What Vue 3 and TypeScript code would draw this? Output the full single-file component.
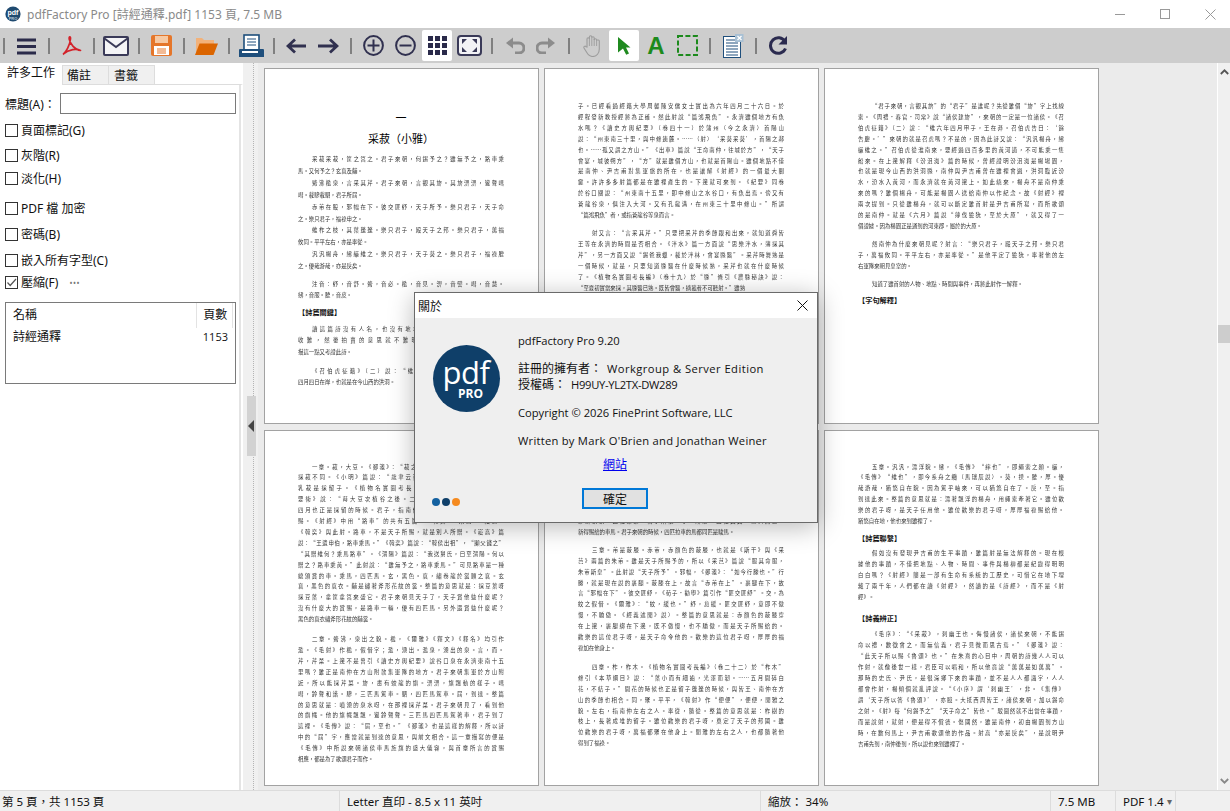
<script setup lang="ts">
interface Para {
  mt: number
  lh?: number
  head?: boolean
  lines?: string[]
  text?: string
  indent?: boolean
}
interface Page {
  title?: boolean
  paras: Para[]
}

const rows = [
  { label: '頁面標記', key: '(G)', mt: 10 },
  { label: '灰階', key: '(R)', mt: 12 },
  { label: '淡化', key: '(H)', mt: 10 },
  { label: 'PDF 檔 加密', key: '', mt: 17 },
  { label: '密碼', key: '(B)', mt: 13 },
  { label: '嵌入所有字型', key: '(C)', mt: 13 },
  { label: '壓縮', key: '(F)', mt: 9, checked: true, more: true },
]

const titleLabel = '標題(A)\uFF1A'
const pageName = '采菽\uFF08小雅\uFF09'
const statusPage = '第 5 頁\uFF0C共 1153 頁'
const statusZoom = '縮放\uFF1A 34%'
const ownerLabel = '註冊的擁有者\uFF1A'
const licenseLabel = '授權碼\uFF1A'

function fw(s: string): string {
  return s
    .replace(/,/g, '\uFF0C')
    .replace(/:/g, '\uFF1A')
    .replace(/\?/g, '\uFF1F')
    .replace(/;/g, '\uFF1B')
    .replace(/\(/g, '\uFF08')
    .replace(/\)/g, '\uFF09')
}

const pages: Page[] = [
  {
    title: true,
    paras: [
      { mt: 6, lh: 11.9, indent: true, lines: ['采菽采菽,筐之筥之。君子來朝,何錫予之?雖無予之,路車乘', '馬。又何予之?玄袞及黼。'] },
      { mt: 0, lh: 11.9, indent: true, lines: ['觱沸檻泉,言采其芹。君子來朝,言觀其旂。其旂淠淠,鸞聲嘒', '嘒。載驂載駟,君子所屆。'] },
      { mt: 0, lh: 11.9, indent: true, lines: ['赤芾在股,邪幅在下。彼交匪紓,天子所予。樂只君子,天子命', '之。樂只君子,福祿申之。'] },
      { mt: 0, lh: 11.9, indent: true, lines: ['維柞之枝,其葉蓬蓬。樂只君子,殿天子之邦。樂只君子,萬福', '攸同。平平左右,亦是率從。'] },
      { mt: 0, lh: 11.9, indent: true, lines: ['汎汎楊舟,紼纚維之。樂只君子,天子葵之。樂只君子,福祿膍', '之。優哉游哉,亦是戾矣。'] },
      { mt: 6, lh: 11, indent: true, lines: ['注音:紓,音舒。觱,音必。檻,音見。淠,音譬。嘒,音慧。', '紼,音服。膍,音皮。'] },
      { mt: 6, head: true, text: '【詩篇關鍵】' },
      { mt: 7, lh: 11.4, indent: true, lines: ['讀這篇詩沒有人名,也沒有地名,然而讀者只要細心體會', '收難,然後拍賣的意思就不難明白,這是尹吉甫的作品', '描這一點又考證此詩。'] },
      { mt: 8, lh: 11, indent: true, lines: ['《召伯虎征籍》(二)說:“維六年四月甲子,王在莽。”', '四月四日在岸,也就是在今山西的洪洞。'] },
    ],
  },
  {
    paras: [
      { mt: 32, lines: ['子。已經看過經籍大學周馨陳安儒女士實出為六年四月二十六日。於', '經程發新教授經將為正確。然此射說“篇鴻飛魚”。永濟雖個地方有魚', '水嗎?《讀史方輿紀要》(卷四十一)於蒲州(今之永濟)首陽山', '說:“州東南三十里,與中條連麓。……(射)‘采葵采葵’,首陽之鄰', '也。……孤又謂之方山。”《出車》篇說“王命南仲,往城於方”,“天子', '會宴,城彼朔方”,“方”就是雖個方山,也就是首陽山。雖個地點不僅', '是南仲、尹吉甫對集軍旅的所在,也是讓解《射經》的一個最大關', '鍵。許許多多射篇都是在雖裡產生的。下邊就可來到。《紀要》同卷', '於谷口關說:“州東南十五里,即中條山之水谷口,有魚出焉。傍又有', '蒼龍谷泉,俱注入大河。又有孔龍溝,在州東三十里中條山。”所謂', '“篇鴻飛魚”者,或指蒼龍谷等泉而言。'] },
      { mt: 7, indent: true, lines: ['射又言:“言采其芹。”只要把采芹的季節跟和出來,就知道舜皆', '王等在永濟的時間是否相合。《泮水》篇一方面說“思樂泮水,薄採其', '芹”,另一方面又說“錫爸我蠟,載於泮林,會宴縣醫”。采芹時舞熟是', '一個時候,就是,只要知道縣醫在什麼時候熟,采芹也就在什麼時候', '了。《植物名實圖考長編》(卷十九)於“縣”條引《農縣秘訣》說:', '“至夏初實當來採,其縣醫已熟。既皆會醫,摘菰者不可聽射。”雖熟'] },
    ],
  },
  {
    paras: [
      { mt: 32, indent: true, lines: ['“君子來朝,言觀其旂”的“君子”是誰呢?先從雖個“旂”字上找線', '索。《周禮·春官·司常》說“諸侯建旂”,來朝的一定是一位諸侯。《召', '伯虎征籍》(二)說:“維六年四月甲子,王在莽。召伯虎告曰:‘餘', '告慶。’”來朝的就是召虎嗎?不是的,因為此詩又說:“汎汎楊舟,紼', '纚維之。”召伯虎從淮南來,要經過四百多里的黃河道,不可能乘一隻', '船來。在上邊解釋《汾沮洳》篇的時候,曾經證明汾沮洳是楊場園,', '也就是現今山西的洪洞縣,南仲與尹吉甫曾在雖裡會過,洪洞臨近汾', '水,汾水入黃河,而永濟就在黃河邊上。如此繞來,楊舟不是南仲乘', '來的嗎?雖個楊舟,可能是楊園人送給南仲以作紀念。故《射經》裡', '兩次提到。只從雖楊舟,就可以斷定雖首射是尹吉甫所寫,而所歌頌', '的是南仲。就是《六月》篇說“薄伐獫狁,至於大原”,就又得了一', '個證據。因為楊園正是通到的河東郡,屬於的大原。'] },
      { mt: 7, indent: true, lines: ['然南仲為什麼來朝見呢?射言:“樂只君子,殿天子之邦。樂只君', '子,萬福攸同。平平左右,亦是率從。”是他平定了獫狁,率著他的左', '右軍隊來朝見皇室的。'] },
      { mt: 7, indent: true, lines: ['知道了雖首射的人物、地點、時間與事件,再將此射作一解釋。'] },
      { mt: 5, head: true, text: '【字句解釋】' },
    ],
  },
  {
    paras: [
      { mt: 30.5, indent: true, lines: ['一章。菽,大豆。《鄭箋》:“菽之言以為藿。”這與《七月》的', '採菽不同。《小明》篇說:“歲聿云莫,采蕭穫菽。”此處的菽是', '乳菽是採留子。《植物名實圖考長編》引《齊民要術》之說,', '要術》說:“蒔大豆次植谷之後。二月中旬為上時。”可見采菽', '四月也正是採留的時候。君子,指南仲。筐、筥,都是盛物器具。', '賜。《射經》中用“路車”的共有五篇,《韓奕》《采芑》《崧高》', '《韓奕》與此射。路車,不是天子所賜,就是別人所贈。《崧高》篇', '說:“王遣申伯,路車乘馬。”《韓奕》篇說:“韓侯出祖”,“顯父餞之”', '“其贈維何?乘馬路車”。《渭陽》篇說:“我送舅氏,曰至渭陽。何以', '贈之?路車乘黃。”此射說:“雖無予之,路車乘馬。”可見路車是一種', '總頒賞的車。乘馬,四匹馬。玄,黑色。袞,繡卷龍於裳願之袞。玄', '袞,黑色的袞衣。黼是繡著斧形花紋的裳。整篇的意思就是:採豆葉呀', '採豆葉,拿筐拿筥來盛它。君子來朝見天子了,天子賞他些什麼呢?', '沒有什麼大的賞賜,是路車一輛,優有四匹馬。另外還賞些什麼呢?', '黑色的袞衣繡斧形花紋的黼裳。'] },
      { mt: 9, indent: true, lines: ['二章。觱沸,泉出之貌。檻,《爾雅》《釋文》《釋名》均引作', '濫。《毛射》作檻,假借字;濫,湧出。濫泉,湧出的泉。言,而。', '芹,芹菜。上邊不是曾引《讀史方輿紀要》說谷口泉在永濟東南十五', '里嗎?雖正是南仲在方山附款集軍隊的地方。君子來朝集軍於方山附', '近,所以能採芹菜。旂,畫有蛟龍的旗。淠淠,旗飄動的樣子。嘒', '嘒,鈴聲和諧。驂,三匹馬駕車。駟,四匹馬駕車。屆,到達。整篇', '的意思就是:噴湧的泉水呀,在那裡採芹菜。君子來朝見了,看到他', '的旗幟。他的旗幟飄飄,鸞鈴聲聲。三匹馬四匹馬駕著車,君子到了', '這裡。《毛傳》說:“屆,至也。”《鄭箋》也是這樣的解釋,所以詩', '中的“屆”字,應當就是到達的意思,與前文相合。這一章描寫的便是', '《毛傳》中所說來朝諸侯車馬旌旗的盛大儀容,與首章所言的賞賜', '相應,都是為了歌頌君子而作。'] },
    ],
  },
  {
    paras: [
      { mt: 85, lines: ['驂騑騤騤,四牡業業,君子所依,小人所腓,四牡翼翼,象弭魚服。', '新得賜給的車馬。君子來朝的時候,四匹拉車的馬都同匹是駿馬。'] },
      { mt: 7, indent: true, lines: ['三章。芾是蔽膝。赤芾,赤顏色的蔽膝,也就是《斯干》與《采', '芑》兩篇的朱芾。雖是天子所賜予的,所以《采芑》篇說“服其命服,', '朱芾斯皇”。此射說“天子所予”。邪幅,《鄭箋》:“如今行縢也。”行', '縢,就是現在說的裹腿。蔽膝在上,故言“赤芾在上”。裹腿在下,故', '言“邪幅在下”。彼交匪紓,《荀子·勸學》篇引作“匪交匪紓”。交,為', '紋之假借。《爾雅》:“紋,緩也。”紓,怠緩。匪交匪紓,意即不傲', '慢,不驕傲。《經義述聞》說)。整篇的意思就是:赤顏色的蔽膝穿', '在上邊,裹腿綁在下邊,既不傲慢,也不驕傲,而是天子所賜給的。', '歡樂的這位君子呀,是天子命令他的。歡樂的這位君子呀,厚厚的福', '祿加在他身上。'] },
      { mt: 8, indent: true, lines: ['四章。柞,柞木。《植物名實圖考長編》(卷二十二)於“柞木”', '條引《本草綱目》說:“葉小而有細齒,光澤而韌。……五月開碎白', '花,不結子。”開花的時候也正是留子蓬蓬的時候,與皆王、南仲在方', '山的季節也相合。同,聚。平平,《韓射》作“便便”,便便,閒雅之', '貌。左右,指南仲左右之人。率從,隨從。整篇的意思就是:柞樹的', '枝上,長著成堆的留子。雖位歡樂的君子呀,奠定了天子的邦國。雖', '位歡樂的君子呀,萬福都聚在他身上。閒雅的左右之人,也都隨著他', '得到了福祿。'] },
    ],
  },
  {
    paras: [
      { mt: 30.5, indent: true, lines: ['五章。汎汎,漂浮貌。紼,《毛傳》“繂也”,即繩索之類。纚,', '《毛傳》“維也”,即今系舟之纜(馬瑞辰說)。葵,揆。膍,厚。優', '哉游哉,猶悠自在貌。因為駕乎岫來,可以猶悠自在了。戾,至。指', '到達此來。整篇的意思就是:漂著飄浮的楊舟,用繩索牽著它。雖位歡', '樂的君子呀,是天子任用他。雖位歡樂的君子呀,厚厚福祿賜給他。', '猶悠自在地,他也來到雖裡了。'] },
      { mt: 6, head: true, text: '【詩篇聯繫】' },
      { mt: 5, indent: true, lines: ['假如沒有發現尹吉甫的生平事蹟,雖篇射是無法解釋的。現在根', '據他的事蹟,不僅把地點、人物、時間、事件與楊柳都是紀錄得明明', '白白嗎?《射經》簡是一部有生命有系統的工歷史,可惜它在地下埋', '藏了兩千年,人們都在讀《射經》,然讀的是《詩經》,而不是《射', '經》。'] },
      { mt: 11, head: true, text: '【詩義辨正】' },
      { mt: 6, indent: true, lines: ['《毛序》:“《采菽》,刺幽王也。侮慢諸侯,諸侯來朝,不能錫', '命以禮,數徵會之,而無信義,君子見微而思古焉。”《鄭箋》說:', '“此天子所以賜《魯頌》也。”在朱熹的心目中,周朝的詩幾人人可以', '作射,就像後世一樣,君臣可以唱和,所以他竟說“萬萬是如萬萬”。', '那時的史氏、尹氏,是很深鄉下來的事蹟,並不是人人都識字,人人', '都會作射,楊傾個就亂評說。“《小序》謂‘刺幽王’,非。《集傳》', '謂‘天子所以答《魯頌》’,亦臆。大抵西周皆王,諸侯來朝,加以錫命', '之射。《射》每“何錫予之”“天子命之”皆也。”駁圖然就不出當在事蹟,', '而是說射,就射,便是得不償德。傷國然,雖是南仲,初由楊園到方山', '時,在數何馬上,尹吉甫歌頌他的作品。射高“亦是戾矣”,是說明尹', '吉甫先到,南仲後到,所以說也來到雖裡了。'] },
    ],
  },
]

function lineHeight(p: Para): string {
  return `${p.lh ?? 10.9}px`
}
</script>

<template>
  <div class="win">
    <header class="titlebar">
      <svg class="appicon" width="16" height="16" viewBox="0 0 16 16">
        <circle cx="8" cy="8" r="7.6" fill="#1f4a70" />
        <text x="8" y="8.5" text-anchor="middle" class="appicon-a">pdf</text>
        <text x="8" y="13.6" text-anchor="middle" class="appicon-b">PRO</text>
      </svg>
      <span class="wintitle">pdfFactory Pro [詩經通釋.pdf] 1153 頁, 7.5 MB</span>
      <div class="winctl">
        <svg width="11" height="11" viewBox="0 0 11 11"><path d="M0 5.5h10" stroke="#999" fill="none" /></svg>
        <svg width="11" height="11" viewBox="0 0 11 11"><rect x=".5" y=".5" width="9" height="9" stroke="#999" fill="none" /></svg>
        <svg width="11" height="11" viewBox="0 0 11 11"><path d="M.5.5l10 10M10.5.5l-10 10" stroke="#999" fill="none" /></svg>
      </div>
    </header>

    <nav class="toolbar">
      <i class="sep m0"></i>
      <svg class="m12" width="19" height="18" viewBox="0 0 19 18"><path d="M0 3h19M0 9.5h19M0 16h19" stroke="#2b2b4a" stroke-width="2.8" /></svg>
      <i class="sep m12"></i>
      <svg class="m11" width="21" height="21" viewBox="0 0 21 21"><path d="M2 19.5C5 17 9 10 9.5 4 9.8 1 7.8 1 8.2 4 9 9 14 15 19.5 15.5 16 13.5 8 14 2.2 19.2" fill="none" stroke="#d3222a" stroke-width="1.7" stroke-linejoin="round" /></svg>
      <i class="sep m11"></i>
      <svg class="m8" width="26" height="20" viewBox="0 0 26 20"><rect x="1" y="1" width="24" height="18" rx="1" fill="#f4f4f6" stroke="#3a3a58" stroke-width="2" /><path d="M1.500 2.500L13 11 24.500 2.500" fill="none" stroke="#3a3a58" stroke-width="2" /></svg>
      <i class="sep m9"></i>
      <svg class="m11" width="21" height="21" viewBox="0 0 21 21"><rect width="21" height="21" rx="2" fill="#e5762a" /><rect x="4" y="1" width="13" height="7" fill="#f6c9a3" /><rect x="3" y="11" width="15" height="9" fill="#fff" /><path d="M6 14h9M6 16h9M6 18h9" stroke="#e5762a" /></svg>
      <i class="sep m11"></i>
      <svg class="m10" width="23" height="19" viewBox="0 0 23 19"><path d="M1 18V2h6l2 2h10v4H5z" fill="#f2b27a" /><path d="M0 19L4.500 7.500H23L18.500 19z" fill="#db6500" /></svg>
      <i class="sep m10"></i>
      <svg class="m9" width="25" height="24" viewBox="0 0 25 24"><rect x="5" y="1" width="15" height="15" fill="#fff" stroke="#1f4f7c" stroke-width="1.600" /><path d="M8 5h9M8 8h9M8 11h9" stroke="#1f4f7c" /><path d="M1 15h23a1 1 0 0 1 1 1v7H0v-7a1 1 0 0 1 1-1z" fill="#1f4f7c" /><rect x="3" y="17" width="16" height="2" fill="#fff" /></svg>
      <i class="sep m9"></i>
      <svg class="m11" width="20" height="16" viewBox="0 0 20 16"><path d="M20 8H2M9 1.500L2 8l7 6.500" fill="none" stroke="#30304f" stroke-width="2.800" /></svg>
      <svg class="m12" width="21" height="16" viewBox="0 0 21 16"><path d="M0 8h19M12 1.500L19 8l-7 6.500" fill="none" stroke="#30304f" stroke-width="2.800" /></svg>
      <i class="sep m11"></i>
      <svg class="m11" width="21" height="21" viewBox="0 0 21 21"><circle cx="10.500" cy="10.500" r="9.400" fill="none" stroke="#30304f" stroke-width="2" /><path d="M4.500 10.500h12M10.500 4.500v12" stroke="#30304f" stroke-width="2" /></svg>
      <svg class="m11" width="21" height="21" viewBox="0 0 21 21"><circle cx="10.500" cy="10.500" r="9.400" fill="none" stroke="#30304f" stroke-width="2" /><path d="M4.500 10.500h12" stroke="#30304f" stroke-width="2" /></svg>
      <span class="tbtn m6">
        <svg width="19" height="19" viewBox="0 0 19 19" fill="#2a2a4a"><rect width="5" height="5" /><rect x="7" width="5" height="5" /><rect x="14" width="5" height="5" /><rect y="7" width="5" height="5" /><rect x="7" y="7" width="5" height="5" /><rect x="14" y="7" width="5" height="5" /><rect y="14" width="5" height="5" /><rect x="7" y="14" width="5" height="5" /><rect x="14" y="14" width="5" height="5" /></svg>
      </span>
      <svg class="m5" width="25" height="21" viewBox="0 0 25 21"><rect x="1" y="1" width="23" height="19" rx="3" fill="#f2f2f5" stroke="#3a3a58" stroke-width="2" /><path d="M5 4h5L5 9zM20 4h-5l5 5zM5 17h5l-5-5zM20 17h-5l5-5z" fill="#3a3a58" /></svg>
      <i class="sep m9"></i>
      <svg class="m13" width="19" height="17" viewBox="0 0 19 17"><path d="M5 6h8a4.500 4.500 0 0 1 0 10H9" fill="none" stroke="#8c8c8c" stroke-width="3" /><path d="M0 6l7-5.500v11z" fill="#8c8c8c" /></svg>
      <svg class="m11" width="19" height="17" viewBox="0 0 19 17"><path d="M14 6H6a4.500 4.500 0 0 0 0 10h4" fill="none" stroke="#8c8c8c" stroke-width="3" /><path d="M19 6l-7-5.500v11z" fill="#8c8c8c" /></svg>
      <i class="sep m13"></i>
      <svg class="m13" width="17" height="22" viewBox="0 0 17 22"><path d="M4 12V4a1.200 1.200 0 0 1 2.400 0V2a1.200 1.200 0 0 1 2.400 0v1a1.200 1.200 0 0 1 2.400 0v2a1.200 1.200 0 0 1 2.400 0l1.800 0a1 1 0 0 1 .9 1v8c0 4-2.500 7.500-6.500 7.500-3 0-4.500-1.500-6-4L1 13c-.6-1.300 1-2.500 2-1.300z" fill="none" stroke="#9c9c9c" stroke-width="1.100" /><path d="M6.400 3v8M8.800 3v8M11.200 4v7M13.600 5v6" stroke="#9c9c9c" stroke-width=".9" /></svg>
      <span class="tbtn m9">
        <svg width="13" height="18" viewBox="0 0 13 18"><path d="M0 0l12.500 10.500H8l3 6-2.800 1.300L5 11.500 0 15.500z" fill="#1f8a1f" /></svg>
      </span>
      <span class="tool-a m9">A</span>
      <svg class="m13" width="21" height="21" viewBox="0 0 21 21"><rect x="1" y="1" width="19" height="19" fill="none" stroke="#1c8a1c" stroke-width="2" stroke-dasharray="5 2.400" /></svg>
      <i class="sep m11"></i>
      <svg class="m12" width="21" height="24" viewBox="0 0 21 24"><rect x=".5" y="2.500" width="17" height="21" fill="#fff" stroke="#1f4f7c" /><path d="M3 6h12M3 9h12M3 12h12M3 15h12M3 18h12M3 21h12" stroke="#1f4f7c" /><rect x="12" y="0" width="8.500" height="8" fill="#a8c0d4" /><path d="M14.500 2l4 4M18.500 2l-4 4" stroke="#fff" stroke-width="1.300" /></svg>
      <i class="sep m11"></i>
      <svg class="m11" width="20" height="19" viewBox="0 0 20 19"><path d="M17 5.500A7.800 7.800 0 1 0 17.500 12.500" fill="none" stroke="#2b2b4f" stroke-width="3" /><path d="M19 0v8.500h-8.500z" fill="#2b2b4f" /></svg>
    </nav>

    <main class="main">
      <aside class="panel">
        <div class="tabs">
          <span class="tab active">許多工作</span>
          <span class="tab second">備註</span>
          <span class="tab third">書籤</span>
        </div>
        <div class="form">
          <label class="titlerow"><span class="titlelabel">{{ titleLabel }}</span><span class="tinput"></span></label>
          <div v-for="r in rows" :key="r.label" class="check" :style="{ marginTop: r.mt + 'px' }">
            <span class="box">
              <svg v-if="r.checked" width="11" height="11" viewBox="0 0 11 11"><path d="M1.500 5.500L4.200 8.500 10 2" fill="none" stroke="#555" stroke-width="1.200" /></svg>
            </span>
            <span class="checklabel">{{ r.label }}{{ r.key }}</span>
            <span v-if="r.more" class="more">•••</span>
          </div>
          <div class="listbox">
            <div class="lhead"><span class="lname">名稱</span><span class="lpages">頁數</span></div>
            <div class="lrow"><span>詩經通釋</span><span class="lcount">1153</span></div>
          </div>
        </div>
      </aside>
      <div class="gutter">
        <span class="dots"></span>
        <span class="gripbar"><span class="grip"></span></span>
      </div>
      <section class="viewer">
        <div class="grid">
          <article v-for="(pg, i) in pages" :key="i" class="page">
            <div v-if="pg.title" class="ptitle"><div class="dash">一</div><div class="pname">{{ pageName }}</div></div>
            <template v-for="(p, j) in pg.paras" :key="j">
              <div v-if="p.head" class="phead" :style="{ marginTop: p.mt + 'px' }">{{ p.text }}</div>
              <div v-else class="para" :style="{ marginTop: p.mt + 'px', lineHeight: lineHeight(p) }">
                <div v-for="(l, k) in p.lines" :key="k" class="ln" :class="{ ind: p.indent && k === 0, end: k === (p.lines?.length ?? 0) - 1 }">{{ fw(l) }}</div>
              </div>
            </template>
          </article>
        </div>
      </section>
      <div class="vscroll">
        <svg width="9" height="6" viewBox="0 0 9 6"><path d="M.8 5L4.500 1.300 8.200 5" fill="none" stroke="#555" stroke-width="1.800" /></svg>
        <span class="thumb"></span>
        <svg width="9" height="6" viewBox="0 0 9 6"><path d="M.8 1L4.500 4.700 8.200 1" fill="none" stroke="#888" stroke-width="1.800" /></svg>
      </div>
    </main>

    <footer class="status">
      <span class="st s1">{{ statusPage }}</span>
      <span class="st s2">Letter 直印 - 8.5 x 11 英吋</span>
      <span class="st s3">{{ statusZoom }}</span>
      <span class="st s4">7.5 MB</span>
      <span class="st s5">PDF 1.4 <b class="caret">▾</b></span>
      <span class="st s6"></span>
    </footer>

    <div class="dialog">
      <div class="dtitle">
        <span>關於</span>
        <svg width="11" height="11" viewBox="0 0 11 11"><path d="M.5.500l10 10M10.500.500l-10 10" stroke="#111" fill="none" /></svg>
      </div>
      <div class="dbody">
        <div class="dleft">
          <div class="logo">
            <span class="logo-pdf">pdf</span>
            <span class="logo-pro">PRO</span>
          </div>
          <div class="ddots"><i class="d1"></i><i class="d2"></i><i class="d3"></i></div>
        </div>
        <div class="dright">
          <p class="l1">pdfFactory Pro 9.20</p>
          <p class="l2"><span class="cjk">{{ ownerLabel }}</span><span class="v1">Workgroup &amp; Server Edition</span></p>
          <p class="l3"><span class="cjk">{{ licenseLabel }}</span><span class="v2">H99UY-YL2TX-DW289</span></p>
          <p class="l4">Copyright © 2026 FinePrint Software, LLC</p>
          <p class="l4 written">Written by Mark O'Brien and Jonathan Weiner</p>
          <a class="link">網站</a>
          <button class="ok">確定</button>
        </div>
      </div>
    </div>
  </div>
</template>

<style>
html, body { margin: 0; padding: 0; background: #fff; }
</style>

<style scoped>
.win {
  position: relative;
  width: 1230px;
  height: 811px;
  overflow: hidden;
  display: flex;
  flex-direction: column;
  font-family: "Noto Sans", "Noto Sans CJK TC", sans-serif;
  font-size: 12px;
  color: #111;
  background: #fff;
}
.titlebar { height: 28px; flex: none; display: flex; align-items: center; padding-left: 5px; }
.appicon { flex: none; }
.appicon-a { font: bold 7px "Liberation Sans", sans-serif; fill: #fff; }
.appicon-b { font: bold 4px "Liberation Sans", sans-serif; fill: #b9c9d8; }
.wintitle { margin-left: 6px; font-size: 12px; color: #8a8a8a; white-space: nowrap; font-family: "Noto Sans", "Noto Sans CJK TC", sans-serif; }
.winctl { margin-left: auto; display: flex; gap: 34px; padding-right: 14px; align-items: center; }
.toolbar { height: 35px; flex: none; background: #cdcdcd; display: flex; align-items: center; padding-left: 3px; }
.toolbar > * { flex: none; }
.sep { display: block; width: 2px; height: 16px; background: #808080; }
.tbtn { width: 30px; height: 31px; background: #fff; border-radius: 2px; display: flex; align-items: center; justify-content: center; }
.tool-a { width: 16px; font: bold 24px/1 "Liberation Sans", sans-serif; color: #1c8a1c; text-align: center; display: flex; justify-content: center; }
.m0 { margin-left: 0; } .m5 { margin-left: 5px; } .m6 { margin-left: 6px; } .m7 { margin-left: 7px; } .m8 { margin-left: 8px; }
.m9 { margin-left: 9px; } .m10 { margin-left: 10px; } .m11 { margin-left: 11px; } .m12 { margin-left: 12px; } .m13 { margin-left: 13px; }

.main { flex: 1; display: flex; min-height: 0; }
.panel { width: 243px; flex: none; display: flex; flex-direction: column; background: #fff; }
.tabs { height: 21px; flex: none; display: flex; align-items: flex-end; border-bottom: 1px solid #ddd; border-right: 2px solid transparent; width: 241px; }
.tab { height: 19px; line-height: 19px; background: #f0f0f0; border: 1px solid #ddd; border-bottom: 0; box-sizing: border-box; padding-left: 4px; }
.tab.active { width: 62px; height: 22px; margin-bottom: -1px; background: #fff; border: 0; padding-left: 7px; line-height: 20px; }
.tab.second { width: 47px; }
.tab.third { width: 46px; border-left: 0; padding-left: 5px; }
.form { flex: 1; width: 241px; box-sizing: border-box; padding: 8px 0 0 5px; border-right: 2px solid #e4e4e4; }
.titlerow { display: flex; align-items: center; height: 21px; }
.titlelabel { width: 55px; flex: none; }
.tinput { width: 176px; flex: none; height: 21px; box-sizing: border-box; border: 1px solid #7a7a7a; background: #fff; }
.check { display: flex; align-items: center; height: 13px; white-space: nowrap; }
.box { width: 13px; height: 13px; box-sizing: border-box; border: 1px solid #333; flex: none; display: flex; align-items: center; justify-content: center; }
.checklabel { margin-left: 3px; line-height: 13px; }
.more { margin-left: 11px; color: #777; font-size: 8px; letter-spacing: 0.5px; }
.listbox { margin-top: 13px; width: 231px; height: 82px; box-sizing: border-box; border: 1px solid #7a7a7a; padding: 0 2px 0 7px; }
.lhead { display: flex; height: 25px; line-height: 24px; }
.lname { width: 184px; border-right: 1px solid #e3e3e3; }
.lpages { width: 36px; padding-left: 6px; box-sizing: border-box; border-right: 1px solid #e3e3e3; }
.lrow { display: flex; justify-content: space-between; line-height: 18px; padding-right: 5px; }
.lcount { font-family: "Open Sans", sans-serif; font-size: 11px; }

.gutter { width: 15px; flex: none; background: #f0f0f0; position: relative; }
.dots { position: absolute; left: 10px; top: 0; bottom: 0; border-left: 1px dotted #b5b5b5; }
.gripbar { position: absolute; left: 4px; top: 333px; width: 9px; height: 60px; background: #d2d2d2; display: flex; align-items: center; }
.grip { margin-left: 1px; width: 0; height: 0; border-style: solid; border-width: 6px 6px 6px 0; border-color: transparent #444 transparent transparent; }
.viewer { flex: 1; min-width: 0; background: #ebebeb; padding: 5px 0 0 6px; overflow: hidden; }
.grid { display: grid; grid-template-columns: repeat(3, 275px); grid-auto-rows: 356px; column-gap: 5px; row-gap: 6px; }
.page { background: #fff; border: 1px solid #a2a2a2; box-sizing: border-box; padding: 0 34px 0 33px; font-family: "Noto Sans CJK TC", sans-serif; font-size: 5.4px; color: #333; overflow: hidden; }
.ptitle { text-align: center; padding-top: 41px; color: #000; }
.dash { font-size: 11px; line-height: 14px; }
.pname { font-size: 11px; line-height: 20px; font-weight: 400; margin-top: 4px; }
.para { filter: blur(0.25px); }
.ln { text-align: justify; text-align-last: justify; }
.ln.ind { padding-left: 14px; }
.ln.end { text-align-last: left; }
.phead { font-size: 7.2px; font-weight: 700; line-height: 10px; color: #111; }
.vscroll { width: 13px; flex: none; box-sizing: border-box; border-left: 1px solid #fff; background: #f0f0f0; display: flex; flex-direction: column; align-items: center; padding: 6px 0 6px; }
.thumb { width: 12px; height: 18px; background: #cdcdcd; margin-top: 250px; margin-bottom: auto; }

.status { height: 21px; flex: none; background: #f0f0f0; border-top: 1px solid #dcdcdc; box-sizing: border-box; display: flex; align-items: center; font-size: 11.5px; color: #111; }
.st { height: 100%; display: flex; align-items: center; box-sizing: border-box; white-space: nowrap; border-right: 1px solid #dcdcdc; padding-left: 7px; }
.s1 { width: 340px; padding-left: 2px; }
.s2 { width: 421px; }
.s3 { width: 290px; }
.s4 { width: 65px; }
.s5 { width: 60px; }
.s6 { width: 54px; border-right: 0; }
.caret { color: #666; font-size: 10px; margin-left: 3px; font-weight: 400; }

.dialog { position: absolute; left: 414px; top: 292px; width: 404px; height: 231px; box-sizing: border-box; border: 1px solid #6a6a6a; background: #efefef; box-shadow: 0 4px 24px rgba(0, 0, 0, 0.28); display: flex; flex-direction: column; }
.dtitle { height: 25px; flex: none; background: #fff; display: flex; align-items: center; justify-content: space-between; padding: 0 9px 0 3px; font-size: 12px; }
.dbody { flex: 1; display: flex; font-family: "Open Sans", "Noto Sans CJK TC", sans-serif; font-size: 11.2px; color: #111; }
.dleft { width: 103px; flex: none; position: relative; }
.logo { position: absolute; left: 18px; top: 27px; width: 67px; height: 67px; border-radius: 50%; background: #0f3f69; color: #fff; display: flex; flex-direction: column; align-items: center; font-family: "Open Sans", sans-serif; }
.logo-pdf { font-size: 31px; line-height: 31px; margin-top: 12px; letter-spacing: -0.5px; margin-left: -1px; }
.logo-pro { font-size: 12px; font-weight: 700; line-height: 12px; margin-top: 0; margin-left: 8px; }
.ddots { position: absolute; left: 17px; top: 180px; display: flex; gap: 2px; }
.ddots i { display: block; width: 8px; height: 8px; border-radius: 50%; }
.d1 { background: #1461a0; } .d2 { background: #0f3f69; } .d3 { background: #f58a1f; }
.dright { flex: 1; display: flex; flex-direction: column; align-items: flex-start; padding-top: 15px; }
.dright p { margin: 0; line-height: 16px; white-space: nowrap; }
.cjk { font-size: 12px; }
.l2 { margin-top: 12px !important; }
.v1 { margin-left: 5px; letter-spacing: 0.45px; }
.v2 { margin-left: 5px; letter-spacing: -0.3px; }
.l4 { margin-top: 12px !important; }
.written { letter-spacing: 0.25px; }
.link { margin: 8px 0 0 85px; color: #0000ee; text-decoration: underline; font-size: 12px; line-height: 16px; }
.ok { margin: 15px 0 0 64px; width: 66px; height: 21px; box-sizing: border-box; border: 2px solid #0078d7; background: #e1e1e1; font: 12px "Noto Sans CJK TC", sans-serif; color: #111; padding: 0; }
</style>
